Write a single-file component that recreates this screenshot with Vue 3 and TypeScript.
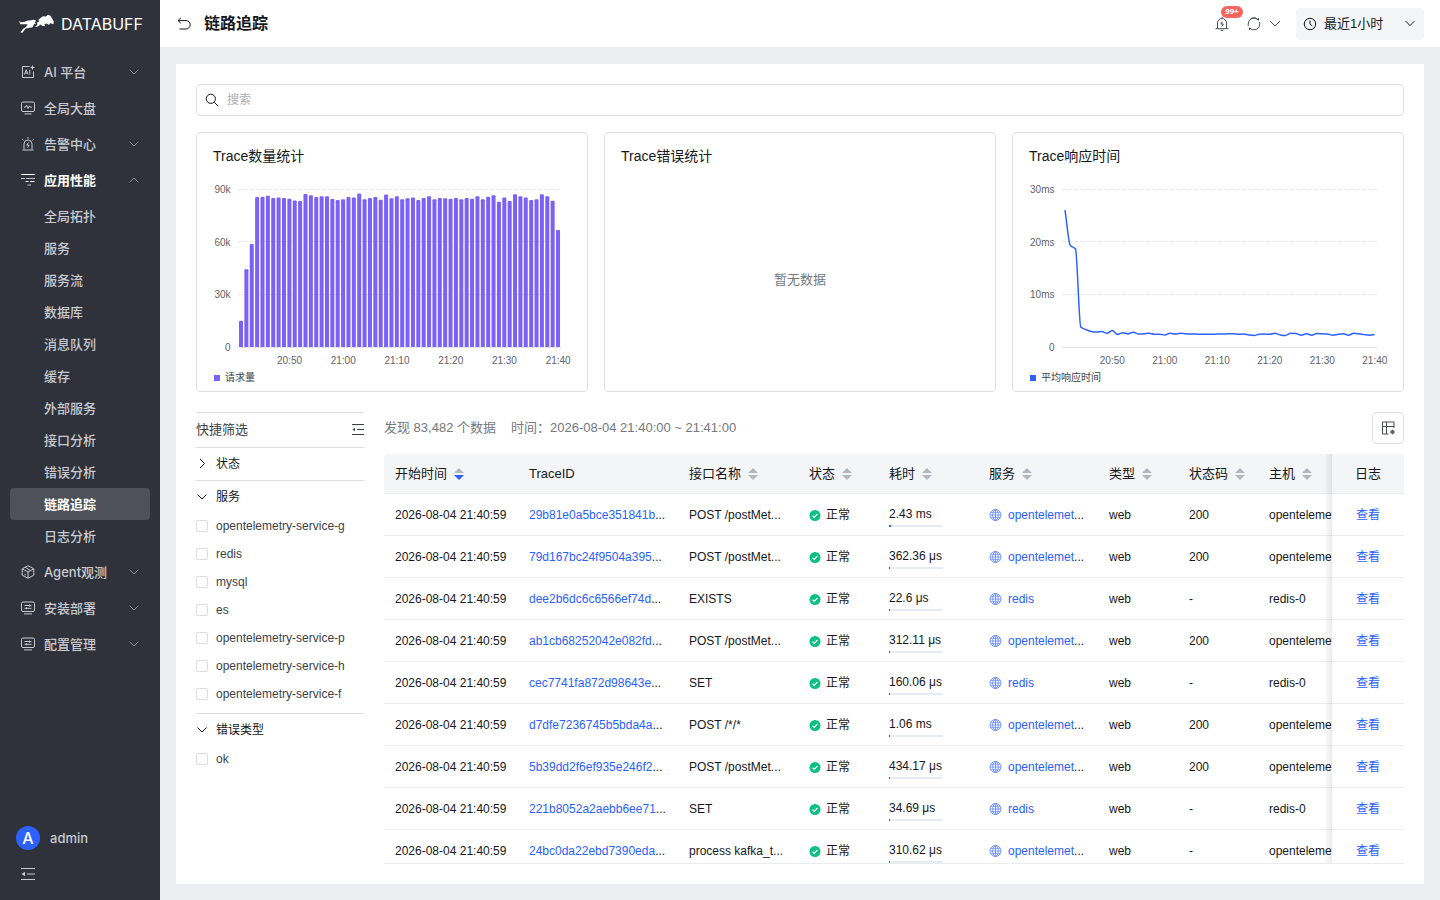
<script setup lang="ts">
import { ref } from 'vue'

interface MenuItem {
  label: string
  icon: string
  arrow?: 'down' | 'up'
  children?: string[]
}

const menu: MenuItem[] = [
  { label: 'AI 平台', icon: 'ai', arrow: 'down' },
  { label: '全局大盘', icon: 'board' },
  { label: '告警中心', icon: 'alarm', arrow: 'down' },
  {
    label: '应用性能',
    icon: 'apm',
    arrow: 'up',
    children: ['全局拓扑', '服务', '服务流', '数据库', '消息队列', '缓存', '外部服务', '接口分析', '错误分析', '链路追踪', '日志分析'],
  },
  { label: 'Agent观测', icon: 'cube', arrow: 'down' },
  { label: '安装部署', icon: 'config', arrow: 'down' },
  { label: '配置管理', icon: 'config', arrow: 'down' },
]
const activeSub = ref('链路追踪')
const keyword = ref('')

// Bar heights in plot pixels are derived from request counts (k)
const plotTop = 18
const plotBottom = 176
const plotHeight = plotBottom - plotTop
const requests: number[] = [
  15, 44.3, 58.6, 85.4, 85.6, 86.2, 84.9, 85.2, 84.9, 84.5, 83.5, 83.1, 87.1, 86.4, 85.4, 85.8, 85.8, 84.3, 83.7, 84.1,
  85.4, 85.2, 87.5, 84.1, 84.9, 85.4, 83.9, 86.8, 84.7, 85.8, 84.1, 84.7, 85.1, 83.7, 84.9, 85.8, 84.1, 84.9, 84.7, 84.5,
  84.9, 84.1, 84.9, 84.5, 85.8, 84.1, 85.6, 86.4, 82.8, 85.2, 83.1, 87, 85.8, 85.2, 83.7, 84.1, 87, 85.8, 83.3, 66.6,
]
const barStep = 322.4 / 60
const bars = requests.map((v, i) => {
  const h = (v / 90) * plotHeight
  const x = 25.3 + i * barStep + 0.7
  const y = plotBottom - h
  return `M${x} ${plotBottom}V${y + 1}q0-1 1-1h2q1 0 1 1V${plotBottom}z`
})

const latency: number[] = [
  26, 19.3, 18.6, 3.8, 3.3, 2.95, 2.85, 2.95, 2.6, 3.15, 2.4, 2.7, 2.5, 2.8, 2.45, 2.5, 2.6, 2.4, 2.4, 2.3,
  2.6, 2.45, 2.6, 2.5, 2.45, 2.45, 2.4, 2.4, 2.4, 2.45, 2.45, 2.5, 2.5, 2.4, 2.45, 2.3, 2.2, 2.4, 2.45, 2.4,
  2.6, 2.3, 2.2, 2.6, 2.55, 2.25, 2.5, 2.25, 2.55, 2.5, 2.45, 2.25, 2.4, 2.5, 2.25, 2.6, 2.5, 2.35, 2.25, 2.35,
]
const lineStep = 5.25

function smoothPath(values: number[]): string {
  const pts = values.map((v, i) => ({ x: 36 + i * lineStep, y: plotBottom - (v / 30) * plotHeight }))
  const slope = pts.slice(1).map((p, i) => (p.y - pts[i].y) / lineStep)
  const tangent = pts.map((_, i) => {
    if (i === 0) return slope[0]
    if (i === pts.length - 1) return slope[i - 1]
    const a = slope[i - 1]
    const b = slope[i]
    return a * b <= 0 ? 0 : (2 * a * b) / (a + b)
  })
  let d = `M${pts[0].x} ${pts[0].y}`
  const t = lineStep / 3
  for (let i = 1; i < pts.length; i++) {
    const p = pts[i - 1]
    const q = pts[i]
    d += `C${p.x + t} ${p.y + tangent[i - 1] * t} ${q.x - t} ${q.y - tangent[i] * t} ${q.x} ${q.y}`
  }
  return d
}
const linePath = smoothPath(latency)

const gridRows = [18.5, 70.5, 123.5]
const labelRows = [22, 75, 127, 180]
const times = ['20:50', '21:00', '21:10', '21:20', '21:30', '21:40']

const services = ['opentelemetry-service-g', 'redis', 'mysql', 'es', 'opentelemetry-service-p', 'opentelemetry-service-h', 'opentelemetry-service-f']
const checked = ref<string[]>([])

interface Column {
  title: string
  cls: string
  sort?: 'none' | 'desc'
}
const columns: Column[] = [
  { title: '开始时间', cls: 'w-time', sort: 'desc' },
  { title: 'TraceID', cls: 'w-trace' },
  { title: '接口名称', cls: 'w-name', sort: 'none' },
  { title: '状态', cls: 'w-short', sort: 'none' },
  { title: '耗时', cls: 'w-cost', sort: 'none' },
  { title: '服务', cls: 'w-name', sort: 'none' },
  { title: '类型', cls: 'w-short', sort: 'none' },
  { title: '状态码', cls: 'w-short', sort: 'none' },
  { title: '主机', cls: 'w-name', sort: 'none' },
]

interface Row {
  id: string
  api: string
  cost: string
  share: number
  service: string
  cut: boolean
  code: string
  host: string
}
const otel = { service: 'opentelemet', cut: true, host: 'opentelemetry' }
const redis = { service: 'redis', cut: false, host: 'redis-0' }
const rows: Row[] = [
  { id: '29b81e0a5bce351841b', api: 'POST /postMet...', cost: '2.43 ms', share: 4, code: '200', ...otel },
  { id: '79d167bc24f9504a395', api: 'POST /postMet...', cost: '362.36 μs', share: 2, code: '200', ...otel },
  { id: 'dee2b6dc6c6566ef74d', api: 'EXISTS', cost: '22.6 μs', share: 2, code: '-', ...redis },
  { id: 'ab1cb68252042e082fd', api: 'POST /postMet...', cost: '312.11 μs', share: 2, code: '200', ...otel },
  { id: 'cec7741fa872d98643e', api: 'SET', cost: '160.06 μs', share: 2, code: '-', ...redis },
  { id: 'd7dfe7236745b5bda4a', api: 'POST /*/*', cost: '1.06 ms', share: 2, code: '200', ...otel },
  { id: '5b39dd2f6ef935e246f2', api: 'POST /postMet...', cost: '434.17 μs', share: 2, code: '200', ...otel },
  { id: '221b8052a2aebb6ee71', api: 'SET', cost: '34.69 μs', share: 2, code: '-', ...redis },
  { id: '24bc0da22ebd7390eda', api: 'process kafka_t...', cost: '310.62 μs', share: 2, code: '-', ...otel },
]
</script>

<template>
  <div class="shell">
    <aside class="sidebar">
      <div class="brand">
        <svg class="brand-mark" viewBox="0 0 36 20" aria-hidden="true">
          <path d="M0 6.500 1.500 8.300 5 8 8 6.800 12 6.300 14.500 5.700 17 6.200 15.800 8.400 17 9.600 15 10.300 13.500 13.200 10 14 6.500 14.600 3.500 18.700 1.300 18.600 4.200 14.800 7 13 8.500 10.300 5 10.200 1.200 10.300z" fill="currentColor" />
          <path d="M17.800 8.500 20 7.800 19.500 5.800 21.500 4 24 2.300 27 2.400 29 .8 31.500 1.800 33 4.300 34.700 7.300 34.500 10.200 32.500 9.500 30.800 9.300 30.200 11 27.500 9.600 25.200 10.500 26.500 12 23.500 12 21.600 10.600 19.300 12.300 16 13.300 18.500 10.300z" fill="currentColor" />
        </svg>
        <span class="brand-name">DATABUFF</span>
      </div>

      <nav class="menu">
        <template v-for="item in menu" :key="item.label">
          <button type="button" class="menu-item" :class="{ open: item.arrow === 'up' }">
            <svg class="menu-icon" viewBox="0 0 14 14" aria-hidden="true">
              <g v-if="item.icon === 'ai'">
                <path d="M8.500 1.500H1.500v11h11V6.500" />
                <path d="M3.500 9.500 5.200 4.800 7 9.500M4.200 8h2M8.800 5v4.500" />
                <path d="M11.500 0l.8 1.700 1.700.8-1.700.8-.8 1.700-.8-1.700L9 2.500l1.700-.8z" fill="currentColor" stroke="none" />
              </g>
              <g v-else-if="item.icon === 'board'">
                <rect x=".5" y="1" width="13" height="9.500" rx="1.500" />
                <path d="M3 6.200h1.500l1-2 1.500 3.300L8.400 4.800l.9 1.400H11M3.500 12.900h7" />
              </g>
              <g v-else-if="item.icon === 'alarm'">
                <path d="M3 12.500V7a4 4 0 0 1 8 0v5.500M1.500 13h11M7 0v1.700M1.300 2.300l1.300 1M12.700 2.300l-1.300 1" />
                <path d="M7.500 5.500 5.800 8.200h2.200L6.700 10.500" />
              </g>
              <g v-else-if="item.icon === 'apm'">
                <path d="M0 1.500h14" />
                <path d="M0 5.500h4M5 5.500h9" opacity=".7" />
                <path d="M4.500 8.500h3M9 8.500h4.500" />
                <path d="M6.500 12h3.500" opacity=".7" />
              </g>
              <g v-else-if="item.icon === 'cube'">
                <path d="M7 .7 12.800 3.800v6.400L7 13.300 1.200 10.200V3.800zM1.500 4 7 7l5.500-3M7 7v6M4.200 2.300 9.500 5.600M4 8.800v1.500" />
              </g>
              <g v-else>
                <rect x=".5" y="1" width="13" height="9.500" rx="1.500" />
                <path d="M3.500 4.500h7M3.500 7.300h7M8.500 3.500v2M5.500 6.300v2M3 12.900h8" />
              </g>
            </svg>
            <span class="menu-label">{{ item.label }}</span>
            <svg v-if="item.arrow" class="menu-arrow" viewBox="0 0 10 6" aria-hidden="true">
              <path v-if="item.arrow === 'down'" d="M.7.8 5 5 9.300.8" />
              <path v-else d="M.7 5.200 5 1l4.300 4.200" />
            </svg>
          </button>
          <div v-if="item.children" class="submenu">
            <button
              v-for="sub in item.children"
              :key="sub"
              type="button"
              class="sub-item"
              :class="{ active: sub === activeSub }"
              @click="activeSub = sub"
            >{{ sub }}</button>
          </div>
        </template>
      </nav>

      <div class="account">
        <span class="avatar">A</span>
        <span>admin</span>
      </div>
      <button type="button" class="fold" aria-label="收起菜单">
        <svg viewBox="0 0 14 14" aria-hidden="true">
          <path d="M0 1.500h14M6 7h8M0 12.500h14" fill="none" stroke="currentColor" />
          <path d="M.5 7 4 4.700v4.600z" fill="currentColor" />
        </svg>
      </button>
    </aside>

    <div class="page">
      <header class="topbar">
        <button type="button" class="icon-btn" aria-label="返回">
          <svg class="i14" viewBox="0 0 14 14" aria-hidden="true">
            <path d="M3.800 1 1 3.600l2.800 2.700M1 3.600h8a4.200 4.200 0 0 1 0 8.400H2.500" />
          </svg>
        </button>
        <h1>链路追踪</h1>
        <div class="tools">
          <button type="button" class="icon-btn bell" aria-label="告警">
            <svg class="i14" viewBox="0 0 14 14" aria-hidden="true">
              <path d="M2.500 11.500V6a4.500 4.500 0 0 1 9 0v5.500M.5 11.700h13M5.500 13.300h3M7 0v1.500" />
              <path d="M7.600 4.500 5.800 7h2.500L6.700 9.500" />
            </svg>
            <span class="badge">99+</span>
          </button>
          <button type="button" class="icon-btn" aria-label="刷新">
            <svg class="i14" viewBox="0 0 14 14" aria-hidden="true">
              <path d="M1.200 9V7A5.800 5.800 0 0 1 11.300 3M12.800 5v2A5.800 5.800 0 0 1 2.700 11M3.500 1.800A5.800 5.800 0 0 1 11.500 3.200V1M2.500 13v-2.200" />
            </svg>
          </button>
          <button type="button" class="icon-btn more" aria-label="刷新间隔">
            <svg class="i-chev" viewBox="0 0 12 7" aria-hidden="true"><path d="M1 1l5 5 5-5" /></svg>
          </button>
          <button type="button" class="range">
            <svg class="i14" viewBox="0 0 14 14" aria-hidden="true">
              <circle cx="7" cy="7" r="5.700" />
              <path d="M7 3.500v3.700l2.300 1.800" />
            </svg>
            <span>最近1小时</span>
            <svg class="i-chev" viewBox="0 0 12 7" aria-hidden="true"><path d="M1.500 1 6 5.500 10.500 1" /></svg>
          </button>
        </div>
      </header>

      <main class="panel">
        <label class="search">
          <svg class="i14" viewBox="0 0 14 14" aria-hidden="true">
            <circle cx="5.800" cy="5.800" r="4.600" />
            <path d="M9.200 9.200l4 4" />
          </svg>
          <input v-model="keyword" type="text" placeholder="搜索" aria-label="搜索" />
        </label>

        <section class="charts">
          <article class="card">
            <h2>Trace数量统计</h2>
            <svg class="chart" viewBox="0 0 358 196" role="img" aria-label="请求量">
              <path v-for="y in gridRows" :key="y" :d="`M25 ${y}h323`" class="grid" />
              <path d="M25 176.500h323" class="axis" />
              <path v-for="(d, i) in bars" :key="i" :d="d" class="bar" />
              <text v-for="(t, i) in ['90k', '60k', '30k', '0']" :key="t" x="17.500" :y="labelRows[i]" text-anchor="end">{{ t }}</text>
              <text v-for="(t, i) in times" :key="t" :x="76.500 + i * barStep * 10" y="193" text-anchor="middle">{{ t }}</text>
            </svg>
            <div class="legend"><i class="violet"></i>请求量</div>
          </article>

          <article class="card">
            <h2>Trace错误统计</h2>
            <div class="empty">暂无数据</div>
          </article>

          <article class="card">
            <h2>Trace响应时间</h2>
            <svg class="chart" viewBox="0 0 358 196" role="img" aria-label="平均响应时间">
              <path v-for="y in gridRows" :key="y" :d="`M33 ${y}h315`" class="grid" />
              <path d="M33 176.500h315" class="axis" />
              <path :d="linePath" class="line" />
              <text v-for="(t, i) in ['30ms', '20ms', '10ms', '0']" :key="t" x="25.500" :y="labelRows[i]" text-anchor="end">{{ t }}</text>
              <text v-for="(t, i) in times" :key="t" :x="83.300 + i * lineStep * 10" y="193" text-anchor="middle">{{ t }}</text>
            </svg>
            <div class="legend"><i class="blue"></i>平均响应时间</div>
          </article>
        </section>

        <div class="lower">
          <aside class="filters">
            <div class="filters-head">
              <span>快捷筛选</span>
              <button type="button" class="icon-btn" aria-label="收起筛选">
                <svg class="i12" viewBox="0 0 12 12" aria-hidden="true">
                  <path d="M0 .5h12M5 5.500h7M0 10.500h12" />
                  <path d="M.5 5.500 3 3.800v3.400z" fill="currentColor" stroke="none" />
                </svg>
              </button>
            </div>
            <div class="group">
              <button type="button" class="group-title">
                <svg class="i12" viewBox="0 0 12 12" aria-hidden="true"><path d="M4 1 8.500 5.500 4 10" /></svg>状态
              </button>
            </div>
            <div class="group">
              <button type="button" class="group-title">
                <svg class="i12" viewBox="0 0 12 12" aria-hidden="true"><path d="M1.500 3.500 6 8l4.500-4.500" /></svg>服务
              </button>
              <div class="options">
                <label v-for="s in services" :key="s"><input v-model="checked" type="checkbox" :value="s" />{{ s }}</label>
              </div>
            </div>
            <div class="group">
              <button type="button" class="group-title">
                <svg class="i12" viewBox="0 0 12 12" aria-hidden="true"><path d="M1.500 3.500 6 8l4.500-4.500" /></svg>错误类型
              </button>
              <div class="options">
                <label><input v-model="checked" type="checkbox" value="ok" />ok</label>
              </div>
            </div>
          </aside>

          <section class="results">
            <div class="summary">
              <span>发现 83,482 个数据</span>
              <span>时间：2026-08-04 21:40:00 ~ 21:41:00</span>
              <button type="button" class="setting" aria-label="列设置">
                <svg class="i14" viewBox="0 0 14 14" aria-hidden="true">
                  <path d="M7.500 13H1.500V1h11.500v6M1.500 5.500h11.500M5.500 1v12" />
                  <circle cx="11.500" cy="11" r="1.500" />
                  <path d="M11.500 8.500v5M9.400 9.800l4.200 2.400M13.600 9.800l-4.200 2.400" stroke-width=".7" />
                </svg>
              </button>
            </div>

            <div class="table-wrap">
              <table>
                <thead>
                  <tr>
                    <th v-for="c in columns" :key="c.title" :class="c.cls">
                      {{ c.title }}<svg v-if="c.sort" class="sorter" viewBox="0 0 10 12" aria-hidden="true">
                        <path d="M5 0l5 5H0z" fill="#b4b7bd" />
                        <path d="M5 12l5-5H0z" :fill="c.sort === 'desc' ? '#2b61ff' : '#b4b7bd'" />
                      </svg>
                    </th>
                    <th class="w-log fixed">日志</th>
                  </tr>
                </thead>
                <tbody>
                  <tr v-for="r in rows" :key="r.id">
                    <td>2026-08-04 21:40:59</td>
                    <td><a href="#">{{ r.id }}</a>...</td>
                    <td>{{ r.api }}</td>
                    <td>
                      <span class="state">
                        <svg viewBox="0 0 12 12" aria-hidden="true">
                          <circle cx="6" cy="6.500" r="5.500" fill="#0cbf83" />
                          <path d="M3.500 6.700l1.800 1.700 3.200-3.600" fill="none" stroke="#fff" stroke-width="1.200" />
                        </svg>正常
                      </span>
                    </td>
                    <td>
                      <div class="cost">{{ r.cost }}</div>
                      <div class="track"><i :style="{ width: r.share + '%' }"></i></div>
                    </td>
                    <td>
                      <span class="svc">
                        <svg viewBox="0 0 13 13" aria-hidden="true">
                          <circle cx="6.500" cy="7" r="5.500" />
                          <ellipse cx="6.500" cy="7" rx="2.700" ry="5.500" />
                          <path d="M6.500 1.500v11M1 7h11M1.700 4.300h9.600M1.700 9.700h9.600" />
                        </svg>
                        <span><a href="#">{{ r.service }}</a><template v-if="r.cut">...</template></span>
                      </span>
                    </td>
                    <td>web</td>
                    <td>{{ r.code }}</td>
                    <td>{{ r.host }}</td>
                    <td class="fixed"><a href="#">查看</a></td>
                  </tr>
                </tbody>
              </table>
            </div>
          </section>
        </div>
      </main>
    </div>
  </div>
</template>

<style>
body {
  margin: 0;
}
</style>

<style scoped>
.shell {
  display: flex;
  height: 100vh;
  background: #edeef0;
  color: #15171c;
  font: 13px/20px "Liberation Sans", "Noto Sans CJK SC", sans-serif;
}
.shell *,
.shell *::before {
  box-sizing: border-box;
}
button {
  padding: 0;
  border: 0;
  background: none;
  color: inherit;
  font: inherit;
  cursor: pointer;
}
a {
  color: #2b61ff;
  text-decoration: none;
}
h1,
h2 {
  margin: 0;
}

.sidebar {
  display: flex;
  flex-direction: column;
  flex: 0 0 160px;
  background: #2f323b;
  color: #c8cad0;
  font-family: Inter, "Noto Sans CJK SC", sans-serif;
  font-weight: 500;
}
.brand {
  display: flex;
  align-items: center;
  gap: 6px;
  height: 48px;
  margin-bottom: 6px;
  padding-left: 19px;
  color: #fff;
}
.brand-mark {
  width: 36px;
  height: 20px;
}
.brand-name {
  font-size: 16px;
  font-weight: 400;
}
.menu-item {
  display: flex;
  align-items: center;
  width: 100%;
  height: 36px;
  padding: 0 21px;
  text-align: left;
}
.menu-item.open {
  color: #fff;
  font-weight: 700;
}
.menu-icon {
  width: 14px;
  height: 14px;
  margin-right: 9px;
  fill: none;
  stroke: currentColor;
}
.menu-label {
  flex: 1;
}
.menu-arrow {
  width: 10px;
  height: 6px;
  fill: none;
  stroke: #8d9099;
}
.submenu {
  display: flex;
  flex-direction: column;
  padding: 2px 10px;
}
.sub-item {
  height: 32px;
  padding-left: 34px;
  border-radius: 4px;
  text-align: left;
}
.sub-item.active {
  background: #4e5159;
  color: #fff;
  font-weight: 700;
}
.account {
  display: flex;
  align-items: center;
  gap: 10px;
  margin-top: auto;
  padding-left: 16px;
}
.avatar {
  width: 24px;
  height: 24px;
  border-radius: 50%;
  background: #2b61ff;
  color: #fff;
  font-size: 16px;
  line-height: 24px;
  text-align: center;
}
.fold {
  align-self: flex-start;
  height: 14px;
  margin: 17px 0 19px 21px;
}
.fold svg {
  display: block;
  width: 14px;
  height: 14px;
}

.page {
  display: flex;
  flex: 1;
  flex-direction: column;
  min-width: 0;
}
.topbar {
  display: flex;
  align-items: center;
  gap: 13px;
  height: 47px;
  padding: 0 16px;
  background: #fff;
}
.topbar h1 {
  font-size: 16px;
  font-weight: 700;
  line-height: 24px;
}
.icon-btn {
  display: flex;
  align-items: center;
}
.i14,
.i12,
.i-chev {
  flex: none;
  fill: none;
  stroke: currentColor;
}
.i14 {
  width: 14px;
  height: 14px;
}
.i12 {
  width: 12px;
  height: 12px;
}
.i-chev {
  width: 12px;
  height: 7px;
}
.topbar > .icon-btn {
  margin-left: 1px;
}
.tools {
  display: flex;
  align-items: center;
  gap: 8px;
  margin-left: auto;
  color: #4a4d55;
}
.bell {
  position: relative;
  margin-right: 10px;
}
.badge {
  position: absolute;
  top: -11px;
  left: 6px;
  width: 22px;
  height: 12px;
  border-radius: 6px;
  background: #f76560;
  color: #fff;
  font: 700 8px/12px "Liberation Sans", sans-serif;
  text-align: center;
}
.more {
  margin-right: 7px;
}
.range {
  display: flex;
  align-items: center;
  gap: 7px;
  width: 128px;
  height: 32px;
  padding: 0 8px 0 7px;
  border-radius: 4px;
  background: #f4f5f7;
  color: #15171c;
}
.range .i-chev {
  margin-left: auto;
}

.panel {
  display: flex;
  flex: 1;
  flex-direction: column;
  min-height: 0;
  margin: 17px 16px 16px;
  padding: 20px;
  background: #fff;
}
.search {
  display: flex;
  align-items: center;
  flex: none;
  gap: 8px;
  height: 32px;
  padding: 0 8px;
  border: 1px solid #dcdee2;
  border-radius: 4px;
}
.search input {
  flex: 1;
  padding: 0;
  border: 0;
  outline: 0;
  background: none;
  font: inherit;
  font-size: 12px;
}
.search input::placeholder {
  color: #a9acb3;
}

.charts {
  display: grid;
  grid-template-columns: repeat(3, 1fr);
  flex: none;
  gap: 16px;
  margin: 16px 0 20px;
}
.card {
  display: flex;
  flex-direction: column;
  padding: 12px 16px 3px;
  border: 1px solid #dcdee2;
  border-radius: 4px;
}
.card h2 {
  font-size: 14px;
  font-weight: 400;
  line-height: 22px;
}
.chart {
  width: 100%;
  height: 196px;
  margin: 4px 0 1px;
  overflow: visible;
}
.chart text {
  fill: #5f6269;
  font-size: 10px;
}
.grid {
  stroke: #e6e7ea;
  stroke-dasharray: 4 2;
}
.axis {
  stroke: #e2e3e6;
}
.bar {
  fill: #7b61f5;
}
.line {
  fill: none;
  stroke: #2b61ff;
  stroke-width: 1.5;
}
.legend {
  display: flex;
  align-items: center;
  gap: 5px;
  padding-left: 1px;
  color: #3c3f47;
  font-size: 10px;
}
.legend i {
  width: 6px;
  height: 6px;
}
.violet {
  background: #7b61f5;
}
.blue {
  background: #2b61ff;
}
.empty {
  display: flex;
  align-items: center;
  justify-content: center;
  flex: 1;
  padding-top: 4px;
  color: #75787f;
}

.lower {
  display: flex;
  flex: 1;
  gap: 20px;
  min-height: 0;
}
.filters {
  flex: 0 0 168px;
  color: #3c3f47;
  font-size: 12px;
}
.filters-head {
  display: flex;
  align-items: center;
  justify-content: space-between;
  height: 35px;
  border-top: 1px solid #dcdee2;
  font-size: 13px;
}
.group {
  min-height: 33px;
  border-top: 1px solid #dcdee2;
}
.group-title {
  display: flex;
  align-items: center;
  gap: 8px;
  width: 100%;
  height: 31px;
  color: #15171c;
}
.options {
  padding-bottom: 5px;
}
.options label {
  display: flex;
  align-items: center;
  gap: 8px;
  height: 28px;
}
.options input {
  width: 12px;
  height: 12px;
  margin: 0;
  border: 1px solid #dcdee2;
  border-radius: 2px;
  appearance: none;
}
.options input:checked {
  background: #2b61ff;
}

.results {
  display: flex;
  flex: 1;
  flex-direction: column;
  min-width: 0;
}
.summary {
  display: flex;
  align-items: center;
  flex: none;
  gap: 15px;
  height: 32px;
  margin-bottom: 10px;
  color: #75787f;
}
.setting {
  display: flex;
  align-items: center;
  justify-content: center;
  width: 32px;
  height: 32px;
  margin-left: auto;
  border: 1px solid #dcdee2;
  border-radius: 4px;
  color: #4a4d55;
}
.table-wrap {
  flex: 1;
  overflow: auto;
  scrollbar-width: none;
  border-bottom: 1px solid #ebecef;
  border-radius: 4px 4px 0 0;
}
table {
  width: 1067px;
  min-width: 100%;
  border-spacing: 0;
  table-layout: fixed;
}
.w-time {
  width: 135px;
}
.w-trace {
  width: 160px;
}
.w-name {
  width: 120px;
}
.w-short {
  width: 80px;
}
.w-cost {
  width: 100px;
}
.w-log {
  width: 72px;
}
th,
td {
  padding: 0 10px;
  overflow: hidden;
  border-bottom: 1px solid #ebecef;
  text-align: left;
  white-space: nowrap;
}
th:first-child,
td:first-child {
  padding-left: 11px;
}
th {
  height: 40px;
  background: #f4f5f7;
  font-size: 13px;
  font-weight: 400;
}
td {
  height: 42px;
  background: #fff;
  font-size: 12px;
}
.sorter {
  width: 10px;
  height: 12px;
  margin-left: 7px;
  vertical-align: -2px;
}
.fixed {
  position: sticky;
  right: 0;
  overflow: visible;
  text-align: center;
}
.fixed::before {
  content: "";
  position: absolute;
  top: 0;
  bottom: -1px;
  left: -8px;
  width: 8px;
  background: linear-gradient(to left, rgba(0, 0, 0, 0.08), rgba(0, 0, 0, 0));
}
.state,
.svc {
  display: flex;
  align-items: center;
  gap: 6px;
}
.state {
  gap: 5px;
}
.state svg,
.svc svg {
  flex: none;
  width: 12px;
  height: 12px;
  overflow: visible;
}
.svc svg {
  width: 13px;
  height: 13px;
  fill: none;
  stroke: #5b84ff;
  stroke-width: 0.8;
}
.cost {
  padding-top: 1px;
  line-height: 20px;
}
.track {
  width: 54px;
  height: 2px;
  margin-top: 1px;
  background: #e6ebf5;
}
.track i {
  display: block;
  min-width: 1px;
  height: 2px;
  background: #2b61ff;
}
</style>
